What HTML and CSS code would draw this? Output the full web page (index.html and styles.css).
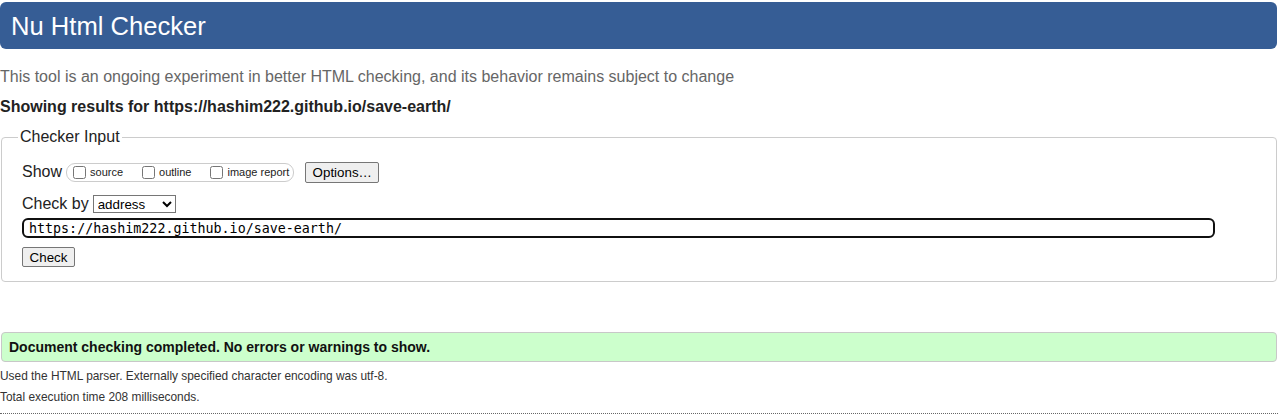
FILE: index.html
```html
<!DOCTYPE html>
<html lang="en">
<head>
<meta charset="utf-8">
<title>Showing results for https://hashim222.github.io/save-earth/ - Nu Html Checker</title>
<link rel="stylesheet" href="styles.css">
</head>
<body>
<header class="banner"><h1 class="banner-title">Nu Html Checker</h1></header>
<p class="intro">This tool is an ongoing experiment in better HTML checking, and its behavior remains subject to change</p>
<p class="showing">Showing results for https://hashim222.github.io/save-earth/</p>
<form class="checker-form">
  <fieldset class="checker-input">
    <legend class="checker-legend">Checker Input</legend>
    <div class="row row-show">
      <span class="row-label">Show</span>
      <fieldset class="opts">
        <label class="opt"><input type="checkbox" class="cb"><span>source</span></label>
        <label class="opt"><input type="checkbox" class="cb"><span>outline</span></label>
        <label class="opt"><input type="checkbox" class="cb"><span>image report</span></label>
      </fieldset>
      <button type="button" class="btn btn-options">Options…</button>
    </div>
    <div class="row row-by">
      <label class="row-label">Check by</label>
      <select class="by-select"><option>address</option></select>
    </div>
    <div class="row row-url">
      <input type="text" class="url" value="https://hashim222.github.io/save-earth/">
    </div>
    <div class="row row-submit">
      <button type="button" class="btn btn-check">Check</button>
    </div>
  </fieldset>
</form>
<div class="success"><p class="success-text">Document checking completed. No errors or warnings to show.</p></div>
<div class="details-block">
  <p class="details">Used the HTML parser. Externally specified character encoding was utf-8.</p>
  <p class="details">Total execution time 208 milliseconds.</p>
</div>
<div class="sep"></div>
</body>
</html>
```
FILE: styles.css
```css
html, body {
  margin: 0;
  padding: 0;
  background: #fff;
}
body {
  font-family: "Liberation Sans", Arial, sans-serif;
  color: #222;
  font-size: 16px;
}
.banner {
  margin: 2px 1px 0 0;
  height: 47px;
  background: #365d95;
  border-radius: 6px;
  display: flex;
  align-items: center;
  padding: 0 11px;
}
.banner-title {
  margin: 0;
  font-size: 25.6px;
  font-weight: normal;
  color: #fff;
  line-height: 30px;
}
.intro {
  margin: 18px 0 0 0;
  line-height: 20px;
  color: #666;
  font-size: 16px;
}
.showing {
  margin: 10px 0 0 0;
  line-height: 20px;
  font-weight: bold;
  font-size: 16px;
}
.checker-form {
  margin: 10px 1px 0 1px;
}
.checker-input {
  margin: 0;
  border: 1px solid #ccc;
  border-radius: 4px;
  padding: 0 20px 14px 20px;
  min-width: 0;
}
.checker-legend {
  margin-left: -4px;
  padding: 0 2px;
  line-height: 20px;
  font-size: 16px;
}
.row {
  display: flex;
  align-items: center;
}
.row-show {
  margin-top: 14px;
  height: 22px;
}
.row-label {
  font-size: 16px;
  line-height: 20px;
}
.opts {
  margin: 0 0 0 4px;
  padding: 0 4px 0 6px;
  border: 1px solid #ccc;
  border-radius: 9px;
  height: 19px;
  box-sizing: border-box;
  display: flex;
  align-items: center;
  gap: 19px;
  min-width: 0;
}
.opt {
  display: flex;
  align-items: center;
  gap: 4px;
  font-size: 11px;
  color: #222;
}
.cb {
  margin: 0;
  width: 13px;
  height: 13px;
}
.btn {
  font-family: "Liberation Sans", Arial, sans-serif;
  font-size: 13.33px;
  color: #000;
  background: #efefef;
  border: 1px solid #767676;
  border-radius: 2px;
  padding: 0 6px;
  box-sizing: border-box;
}
.btn-options {
  margin-left: 11px;
  height: 21px;
  width: 74px;
}
.row-by {
  margin-top: 11px;
  height: 20px;
}
.by-select {
  margin-left: 4px;
  width: 83px;
  height: 18px;
  font-family: "Liberation Sans", Arial, sans-serif;
  font-size: 13.33px;
  color: #000;
  border: 1px solid #767676;
  border-radius: 0;
  background: #fff;
  padding: 0;
}
.row-url {
  margin-top: 4px;
}
.url {
  width: 1193px;
  height: 20px;
  box-sizing: border-box;
  border: 2px solid #101010;
  border-radius: 6px;
  padding: 0 5px;
  font-family: "DejaVu Sans Mono", monospace;
  font-size: 13.33px;
  color: #000;
  outline: none;
}
.row-submit {
  margin-top: 9px;
}
.btn-check {
  height: 20px;
  width: 53px;
}
.success {
  margin: 50px 1px 0 1px;
  background: #ccffcc;
  border: 1px solid #c8c8c8;
  border-radius: 4px;
  height: 30px;
  box-sizing: border-box;
  display: flex;
  align-items: center;
  padding: 0 7px;
}
.success-text {
  margin: 0;
  font-weight: bold;
  font-size: 14px;
  color: #111;
}
.details-block {
  margin-top: 4px;
}
.details {
  margin: 0;
  font-size: 11.9px;
  line-height: 21px;
  color: #333;
}
.sep {
  margin-top: 5px;
  border-top: 1px dotted #666;
}
```
